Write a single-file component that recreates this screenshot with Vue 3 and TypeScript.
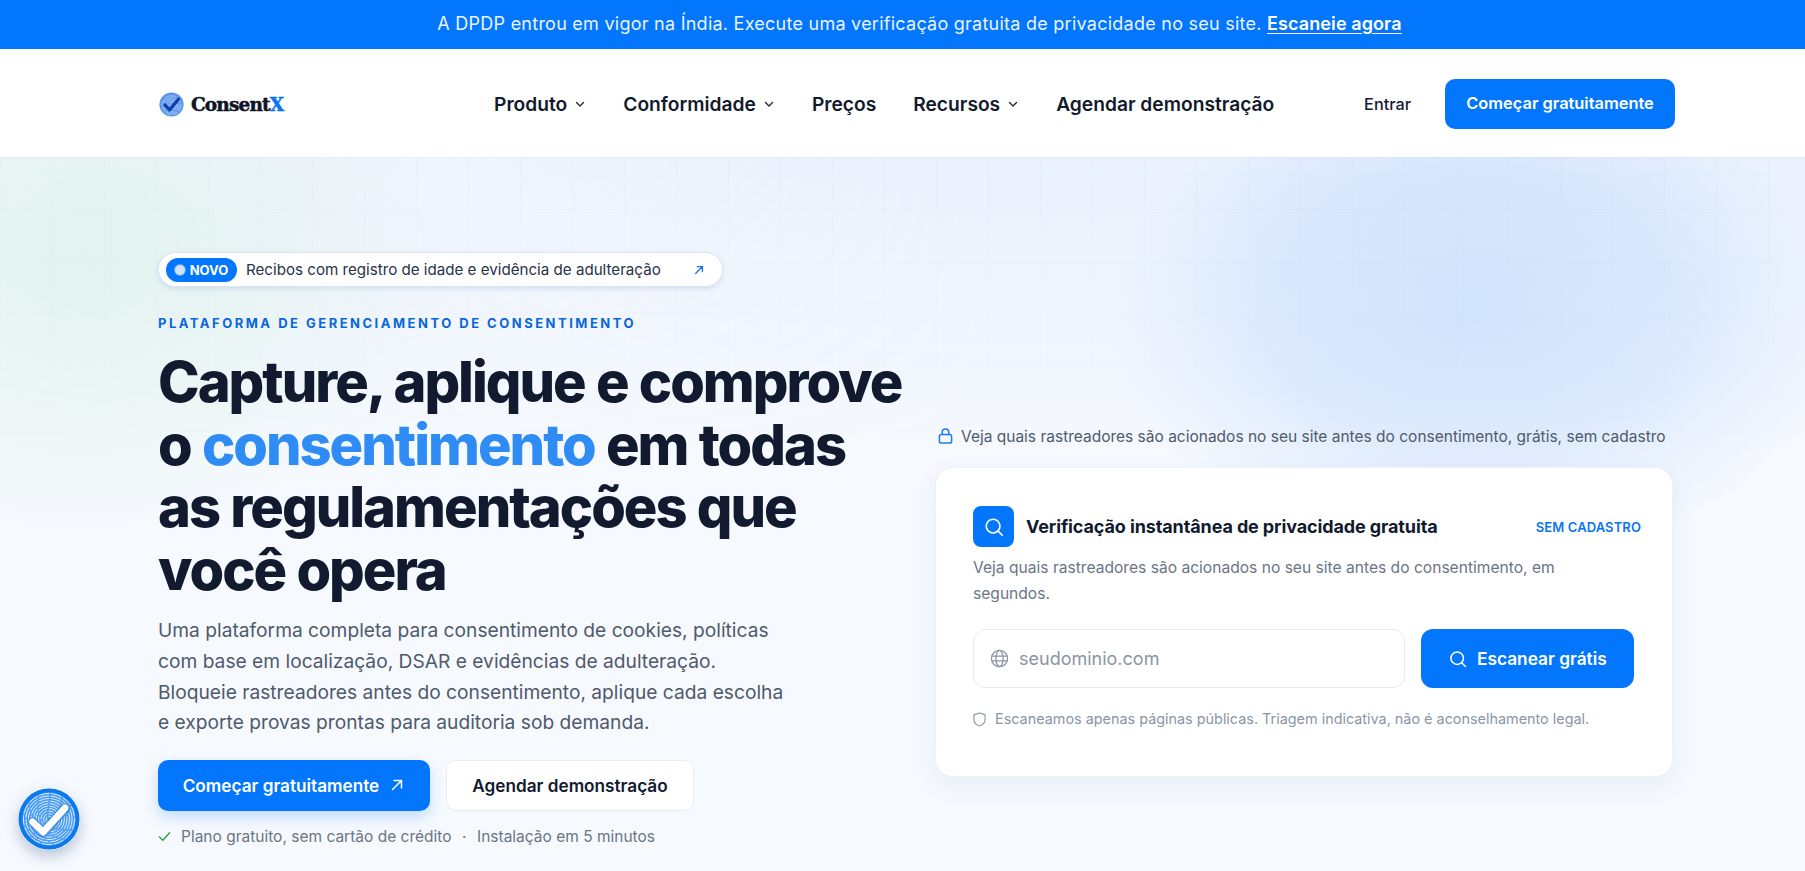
<script setup lang="ts">
const arcs: number[] = [4, 7, 10, 13, 16, 19, 22, 25]
const fabArcs: number[] = [3, 5.6, 8.2, 10.8, 13.4, 16, 18.6, 21.2, 23.8, 26.4]
const navLinks: { label: string; caret: boolean }[] = [
  { label: 'Produto', caret: true },
  { label: 'Conformidade', caret: true },
  { label: 'Preços', caret: false },
  { label: 'Recursos', caret: true },
  { label: 'Agendar demonstração', caret: false },
]
</script>

<template>
  <div class="page">
    <div class="banner">
      A DPDP entrou em vigor na Índia. Execute uma verificação gratuita de privacidade no seu site.&nbsp;<a class="banner-link">Escaneie agora</a>
    </div>

    <header class="nav">
      <div class="brand">
        <svg class="brand-mark" viewBox="0 0 64 64" fill="none">
          <circle cx="32" cy="32" r="31" fill="#5b95ea" />
          <circle v-for="r in arcs" :key="r" cx="32" cy="34" :r="r" stroke="#b9d3f7" stroke-width="1.4" stroke-dasharray="16 3" />
          <path d="M15 33 L27 46 L50 18" stroke="#0d3fa8" stroke-width="8" stroke-linecap="round" stroke-linejoin="round" />
        </svg>
        <span class="brand-name">Consent<em>X</em></span>
      </div>
      <nav class="links">
        <a v-for="l in navLinks" :key="l.label" class="link">
          {{ l.label }}
          <svg v-if="l.caret" class="caret" viewBox="0 0 12 12" fill="none"><path d="M2.5 4.5 L6 8 L9.5 4.5" stroke="#1f2937" stroke-width="1.4" stroke-linecap="round" stroke-linejoin="round" /></svg>
        </a>
      </nav>
      <div class="nav-actions">
        <a class="signin">Entrar</a>
        <a class="nav-cta">Começar gratuitamente</a>
      </div>
    </header>

    <main class="hero">
      <div class="bg-wash"></div>
      <div class="bg-grid"></div>
      <div class="bg-blob"></div>
      <div class="bg-green"></div>

      <section class="left">
        <div class="pill">
          <span class="badge"><i class="dot"></i>NOVO</span>
          <span class="pill-text">Recibos com registro de idade e evidência de adulteração</span>
          <svg class="pill-arrow" viewBox="0 0 14 14" fill="none"><path d="M3 11 L11 3 M5 3 H11 V9" stroke="#1f6fe0" stroke-width="1.5" stroke-linecap="round" stroke-linejoin="round" /></svg>
        </div>
        <p class="eyebrow">PLATAFORMA DE GERENCIAMENTO DE CONSENTIMENTO</p>
        <h1 class="title">Capture, aplique e comprove<br />o <span>consentimento</span> em todas<br />as regulamentações que<br />você opera</h1>
        <p class="lead">Uma plataforma completa para consentimento de cookies, políticas<br />com base em localização, DSAR e evidências de adulteração.<br />Bloqueie rastreadores antes do consentimento, aplique cada escolha<br />e exporte provas prontas para auditoria sob demanda.</p>
        <div class="cta-row">
          <a class="btn primary">Começar gratuitamente
            <svg class="btn-arrow" viewBox="0 0 16 16" fill="none"><path d="M3.5 12.5 L12.5 3.5 M5 3.5 H12.5 V11" stroke="#fff" stroke-width="1.5" stroke-linecap="round" stroke-linejoin="round" /></svg>
          </a>
          <a class="btn ghost">Agendar demonstração</a>
        </div>
        <div class="assure">
          <svg class="check" viewBox="0 0 14 14" fill="none"><path d="M1.5 7.5 L5.2 11 L12.5 3" stroke="#22a34a" stroke-width="1.4" stroke-linecap="round" stroke-linejoin="round" /></svg>
          <span>Plano gratuito, sem cartão de crédito</span>
          <span class="sep">·</span>
          <span>Instalação em 5 minutos</span>
        </div>
      </section>

      <section class="right">
        <div class="note">
          <svg class="lock" viewBox="0 0 16 18" fill="none"><rect x="1.5" y="7.5" width="13" height="9" rx="2" stroke="#1f7bf2" stroke-width="1.6" /><path d="M4.5 7.5 V5 a3.5 3.5 0 0 1 7 0 V7.5" stroke="#1f7bf2" stroke-width="1.6" /></svg>
          Veja quais rastreadores são acionados no seu site antes do consentimento, grátis, sem cadastro
        </div>
        <div class="card">
          <div class="card-head">
            <span class="icon-box">
              <svg viewBox="0 0 24 24" fill="none"><circle cx="11" cy="11" r="7.5" stroke="#fff" stroke-width="1.8" /><path d="M16.5 16.5 L21 21" stroke="#fff" stroke-width="1.8" stroke-linecap="round" /></svg>
            </span>
            <h2 class="card-title">Verificação instantânea de privacidade gratuita</h2>
            <span class="tag">SEM CADASTRO</span>
          </div>
          <p class="card-desc">Veja quais rastreadores são acionados no seu site antes do consentimento, em segundos.</p>
          <div class="scan-row">
            <div class="field">
              <svg class="globe" viewBox="0 0 20 20" fill="none" stroke="#8b95a5" stroke-width="1.3"><circle cx="10" cy="10" r="8.5" /><ellipse cx="10" cy="10" rx="3.8" ry="8.5" /><path d="M1.5 7.5 H18.5 M1.5 12.5 H18.5" /></svg>
              <span class="placeholder">seudominio.com</span>
            </div>
            <a class="scan-btn">
              <svg viewBox="0 0 24 24" fill="none"><circle cx="11" cy="11" r="7.5" stroke="#fff" stroke-width="1.8" /><path d="M16.5 16.5 L21 21" stroke="#fff" stroke-width="1.8" stroke-linecap="round" /></svg>
              Escanear grátis
            </a>
          </div>
          <div class="legal">
            <svg class="shield" viewBox="0 0 14 16" fill="none"><path d="M7 1 L13 3 V8 C13 11.5 10 14 7 15 C4 14 1 11.5 1 8 V3 Z" stroke="#8b95a5" stroke-width="1.2" stroke-linejoin="round" /></svg>
            Escaneamos apenas páginas públicas. Triagem indicativa, não é aconselhamento legal.
          </div>
        </div>
      </section>

      <div class="fab">
        <svg viewBox="0 0 64 64" fill="none">
          <circle cx="32" cy="32" r="31.5" fill="#0b78ee" />
          <circle cx="32" cy="32" r="27.5" fill="#4a9df3" />
          <circle v-for="r in fabArcs" :key="r" cx="32" cy="32" :r="r" stroke="#dcecfe" stroke-width="1" stroke-dasharray="11 1.6" />
          <path d="M15 35 L26 46 L48.5 21" stroke="#1a6fd8" stroke-width="10.5" stroke-linecap="round" stroke-linejoin="round" opacity=".5" />
          <path d="M15 35 L26 45.5 L48.5 20.6" stroke="#fff" stroke-width="7" stroke-linecap="round" stroke-linejoin="round" />
        </svg>
      </div>
    </main>
  </div>
</template>

<style>
html, body { margin: 0; padding: 0; background: #f7faff; overflow: hidden; }
</style>

<style scoped>
.page {
  width: 1805px;
  height: 871px;
  overflow: hidden;
  font-family: Inter, "Noto Sans", sans-serif;
  color: #111a2e;
  display: flex;
  flex-direction: column;
}
a { cursor: pointer; }

.banner {
  height: 49px;
  flex: none;
  display: flex;
  align-items: center;
  justify-content: center;
  background: #0376fe;
  color: #eaf3ff;
  font-size: 18px;
  letter-spacing: 0.25px;
  padding: 0 0 3px 34px;
  box-sizing: border-box;
}
.banner-link { color: #fff; font-weight: 600; text-decoration: underline; text-underline-offset: 3px; letter-spacing: 0.1px; }

.nav {
  height: 108px;
  flex: none;
  box-sizing: border-box;
  background: #fff;
  display: flex;
  align-items: center;
  padding: 2px 130px 0 159px;
}
.brand { display: flex; align-items: center; gap: 7px; width: 335px; }
.brand-mark { width: 25px; height: 25px; }
.brand-name { font-family: "DejaVu Serif", serif; font-weight: 700; font-size: 18.5px; letter-spacing: -0.85px; color: #0e1526; -webkit-text-stroke: 0.5px currentColor; }
.brand-name em { font-style: normal; color: #0a74f0; }

.links { display: flex; align-items: center; gap: 37px; width: 617px; }
.link { display: flex; align-items: center; gap: 7px; font-size: 19.2px; font-weight: 600; color: #121a2c; white-space: nowrap; }
.caret { width: 12px; height: 12px; }

.nav-actions { display: flex; align-items: center; margin-left: auto; gap: 34px; }
.signin { font-size: 16.3px; font-weight: 500; color: #172033; }
.nav-cta {
  width: 230px;
  height: 50px;
  border-radius: 10px;
  background: #0376fe;
  color: #fff;
  font-size: 16.4px;
  font-weight: 600;
  display: flex;
  align-items: center;
  justify-content: center;
  padding-bottom: 2px;
  box-sizing: border-box;
}

.hero {
  position: relative;
  flex: 1;
  display: grid;
  grid-template-columns: 777px 738px;
  padding-left: 158px;
  background: #f6f9fe;
  overflow: hidden;
}
.bg-wash {
  position: absolute;
  inset: 0;
  background: linear-gradient(to bottom, rgba(205, 224, 250, .3) 0, rgba(205, 224, 250, 0) 300px);
  -webkit-mask-image: linear-gradient(to right, rgba(0, 0, 0, .25) 0, #000 55%);
  mask-image: linear-gradient(to right, rgba(0, 0, 0, .25) 0, #000 55%);
}
.bg-grid {
  position: absolute;
  inset: 0;
  background-image:
    linear-gradient(to right, rgba(90, 130, 190, .04) 1px, transparent 1px),
    linear-gradient(to bottom, rgba(90, 130, 190, .035) 1px, transparent 1px);
  background-size: 52px 52px;
  -webkit-mask-image: linear-gradient(to bottom, #000 0, transparent 280px);
  mask-image: linear-gradient(to bottom, #000 0, transparent 280px);
}
.bg-blob {
  position: absolute;
  left: 1110px;
  top: -90px;
  width: 730px;
  height: 500px;
  border-radius: 50%;
  background: radial-gradient(closest-side, rgba(130, 180, 248, .28), rgba(130, 180, 248, .19) 55%, rgba(130, 180, 248, 0));
}
.bg-green {
  position: absolute;
  left: -300px;
  top: -180px;
  width: 760px;
  height: 560px;
  border-radius: 50%;
  background: radial-gradient(closest-side, rgba(190, 232, 205, .32), rgba(190, 232, 205, 0));
}

.left, .right { position: relative; }
.left { padding-top: 95px; }

.pill {
  width: 565px;
  height: 35px;
  box-sizing: border-box;
  display: flex;
  align-items: center;
  padding: 0 14px 0 7px;
  border-radius: 18px;
  background: #fff;
  border: 1px solid #dbe6f5;
  box-shadow: 0 2px 5px rgba(70, 110, 170, .16);
}
.badge {
  height: 24px;
  width: 71px;
  border-radius: 12px;
  background: #0376fe;
  color: #fff;
  font-size: 13px;
  font-weight: 700;
  display: flex;
  align-items: center;
  justify-content: center;
  gap: 5px;
}
.dot { width: 10px; height: 10px; border-radius: 50%; background: #cfe3ff; box-shadow: 0 0 0 1px rgba(255, 255, 255, .35); }
.pill-text { margin-left: 9px; font-size: 15.15px; color: #273347; white-space: nowrap; }
.pill-arrow { width: 12px; height: 12px; margin-left: auto; margin-right: 3px; }

.eyebrow {
  margin: 28px 0 0;
  font-size: 13px;
  line-height: 16px;
  font-weight: 700;
  letter-spacing: 2.5px;
  color: #0a66d9;
  white-space: nowrap;
}
.title {
  margin: 20px 0 0;
  font-size: 56px;
  line-height: 62.6px;
  font-weight: 780;
  font-optical-sizing: none;
  font-variation-settings: "opsz" 14;
  letter-spacing: -2px;
  word-spacing: 1px;
  color: #111a2e;
  white-space: nowrap;
}
.title span { color: #2f8cf5; }
.lead {
  margin: 14px 0 0;
  font-size: 19.2px;
  line-height: 30.6px;
  color: #4f5a6b;
  white-space: nowrap;
}
.cta-row { display: flex; gap: 16px; margin-top: 22px; }
.btn {
  height: 51px;
  box-sizing: border-box;
  border-radius: 10px;
  font-size: 17.2px;
  font-weight: 600;
  display: flex;
  align-items: center;
  justify-content: center;
}
.primary { width: 272px; background: #0376fe; color: #fff; gap: 10px; box-shadow: 0 6px 14px rgba(3, 118, 254, .22); }
.btn-arrow { width: 16px; height: 16px; }
.ghost { width: 248px; background: #fff; border: 1px solid #e8edf5; color: #111a2e; }
.assure { display: flex; align-items: center; margin-top: 16px; font-size: 15.5px; line-height: 20px; color: #6b7585; }
.check { width: 13px; height: 13px; margin-right: 10px; }
.sep { margin: 0 10.5px; }

.right { padding-top: 269px; }
.note {
  display: flex;
  align-items: center;
  gap: 8px;
  height: 20px;
  padding-left: 3px;
  font-size: 15.5px;
  color: #4f5a6b;
  white-space: nowrap;
}
.lock { width: 15px; height: 18px; }
.card {
  margin-top: 21px;
  width: 738px;
  height: 310px;
  box-sizing: border-box;
  padding: 38px 38px 0 37px;
  border-radius: 18px;
  background: #fff;
  border: 1px solid #eef2f8;
  box-shadow: 0 8px 24px rgba(60, 100, 160, .08);
}
.card-head { display: flex; align-items: center; gap: 12px; }
.icon-box {
  width: 41px;
  height: 41px;
  border-radius: 8px;
  background: #0376fe;
  display: flex;
  align-items: center;
  justify-content: center;
}
.icon-box svg { width: 22px; height: 22px; }
.card-title { margin: 0; font-size: 18px; font-weight: 700; letter-spacing: -0.12px; color: #111a2e; white-space: nowrap; }
.tag { margin-left: auto; font-size: 13px; font-weight: 600; letter-spacing: 0.1px; color: #0a74f0; white-space: nowrap; margin-right: -7px; }
.card-desc { margin: 8px 0 0; font-size: 15.6px; line-height: 26px; color: #6b7585; width: 620px; }
.scan-row { display: flex; gap: 16px; margin-top: 22px; }
.field {
  width: 433px;
  height: 59px;
  box-sizing: border-box;
  border-radius: 12px;
  border: 1px solid #e7ebf2;
  background: #fff;
  display: flex;
  align-items: center;
  padding-left: 16px;
  gap: 10px;
}
.globe { width: 19px; height: 19px; }
.placeholder { font-size: 18px; color: #8b95a5; }
.scan-btn {
  width: 214px;
  height: 59px;
  border-radius: 12px;
  background: #0376fe;
  color: #fff;
  font-size: 17.3px;
  font-weight: 600;
  display: flex;
  align-items: center;
  justify-content: center;
  gap: 9px;
}
.scan-btn svg { width: 20px; height: 20px; }
.legal { display: flex; align-items: center; gap: 9px; margin-top: 21px; font-size: 14.4px; line-height: 20px; color: #8b95a5; white-space: nowrap; }
.shield { width: 13px; height: 15px; }

.fab {
  position: absolute;
  left: 18px;
  top: 631px;
  width: 62px;
  height: 62px;
  border-radius: 50%;
  box-shadow: 0 6px 14px rgba(30, 60, 110, .28);
}
.fab svg { display: block; width: 62px; height: 62px; }
</style>
